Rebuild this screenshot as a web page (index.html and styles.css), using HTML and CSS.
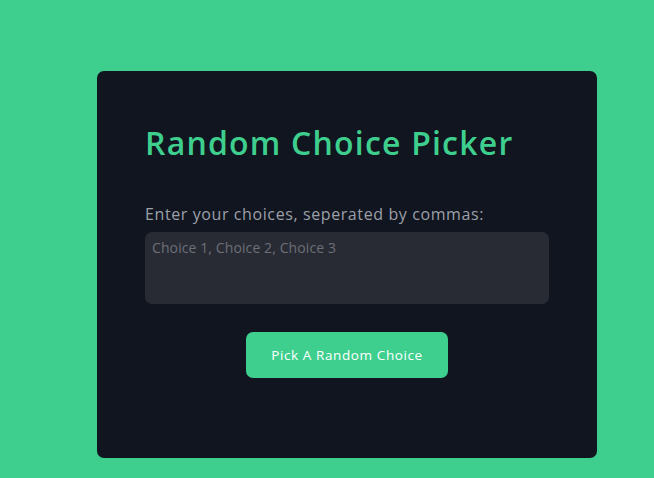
FILE: index.html
```html
<!DOCTYPE html>
<html lang="en">
<head>
<meta charset="utf-8">
<title>Random Choice Picker</title>
<link rel="stylesheet" href="styles.css">
</head>
<body>
<main class="card">
  <h1 class="title">Random Choice Picker</h1>
  <label class="label" for="choices">Enter your choices, seperated by commas:</label>
  <textarea id="choices" class="input" placeholder="Choice 1, Choice 2, Choice 3"></textarea>
  <div class="actions">
    <button class="btn" type="button">Pick A Random Choice</button>
  </div>
</main>
</body>
</html>
```

FILE: styles.css
```css
* { box-sizing: border-box; }
html, body { height: 100%; }
body {
  margin: 0;
  background: #3ecf8e;
  font-family: "Open Sans", "Noto Sans", sans-serif;
  padding: 71px 0 0 97px;
  overflow: hidden;
}
.card {
  width: 500px;
  height: 387px;
  background: #111520;
  border-radius: 7px;
  padding: 48px 48px 0 48px;
  display: flex;
  flex-direction: column;
}
.title {
  margin: 0;
  color: #3ecf8e;
  font-size: 32px;
  font-weight: 600;
  line-height: 48px;
  letter-spacing: 1.2px;
}
.label {
  margin-top: 35px;
  color: #9ca0a8;
  font-size: 16px;
  line-height: 24px;
  letter-spacing: 0.6px;
}
.input {
  margin-top: 6px;
  height: 72px;
  width: 100%;
  background: #292b34;
  border: none;
  border-radius: 7px;
  padding: 6px 7px;
  resize: none;
  font-family: inherit;
  font-size: 14px;
  letter-spacing: 0.1px;
  color: #ddd;
  outline: none;
}
.input::placeholder { color: #6c6f78; }
.actions {
  display: flex;
  justify-content: center;
  margin-top: 28px;
}
.btn {
  width: 202px;
  height: 46px;
  background: #3ecf8e;
  color: #fff;
  border: none;
  border-radius: 7px;
  font-family: inherit;
  font-size: 13.5px;
  font-weight: 500;
  letter-spacing: 0.6px;
}
```
